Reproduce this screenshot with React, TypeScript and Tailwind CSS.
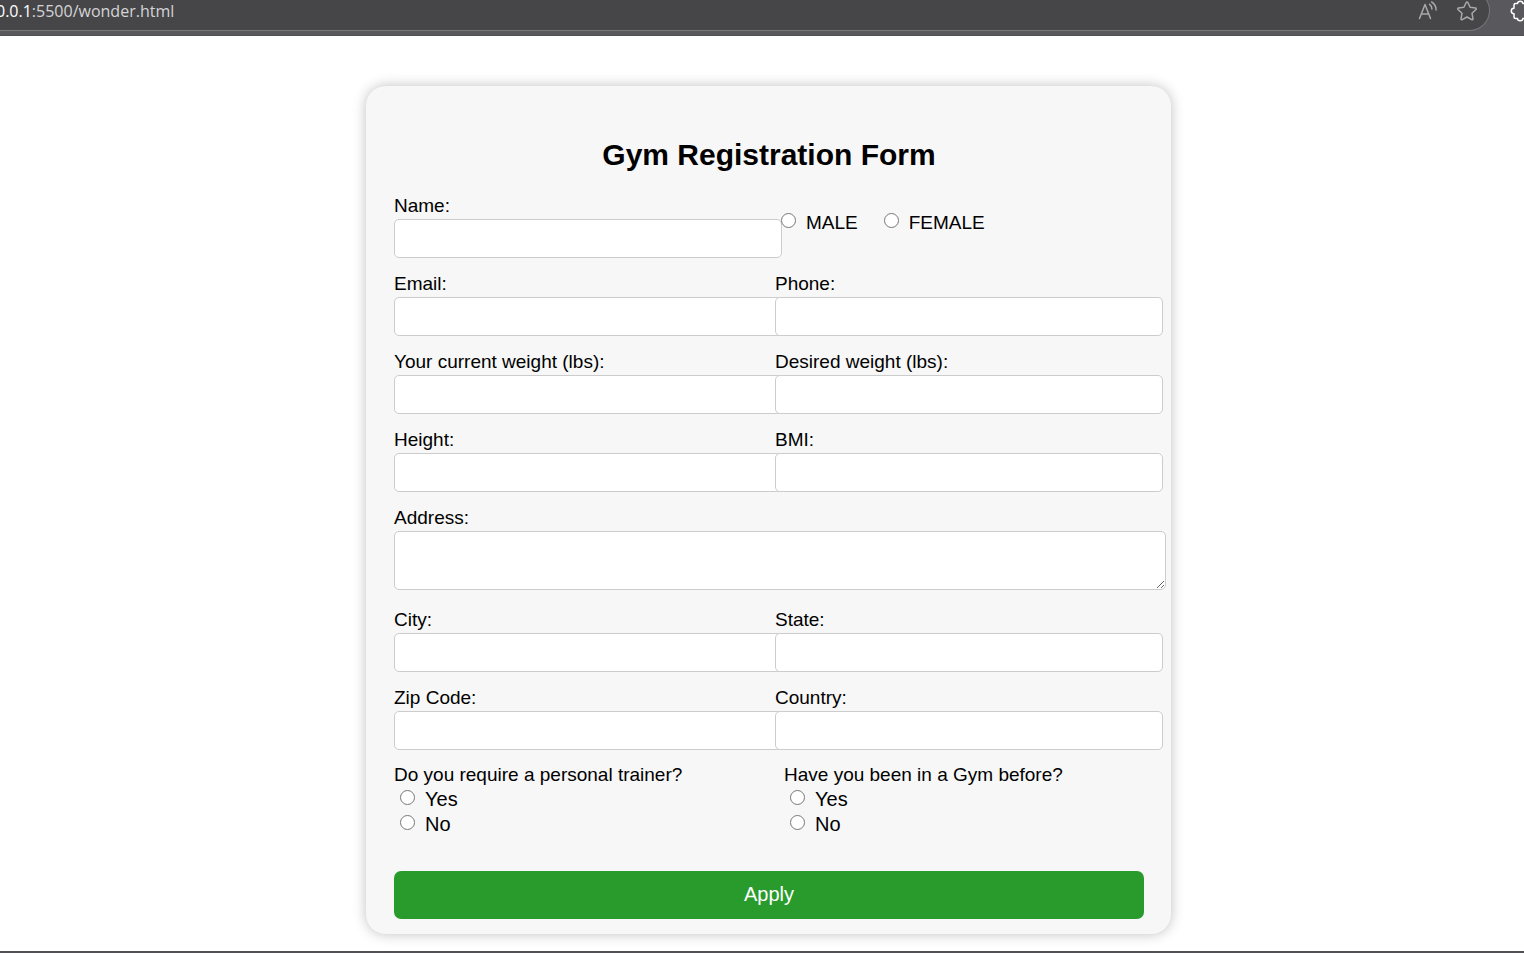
import React, { useId } from "react";

const inputClass =
  "block h-[39px] w-full rounded-[5px] border border-[#ccc] bg-white px-2 text-[19px]";

const labelClass = "mb-[2px] block text-[19px] leading-[22px]";

function Field({ label, type = "text" }: { label: string; type?: string }) {
  const id = useId();
  return (
    <div className="relative min-w-0">
      <label htmlFor={id} className={labelClass}>
        {label}
      </label>
      <div className="-mr-[7px]">
        <input id={id} type={type} className={inputClass} />
      </div>
    </div>
  );
}

function Choice({ name, label, small = false }: { name: string; label: string; small?: boolean }) {
  return (
    <label className={`flex items-start leading-[25px] ${small ? "text-[19px]" : "text-[20px]"}`}>
      <input
        type="radio"
        name={name}
        value={label}
        className="mt-[3px] mr-[10px] h-[15px] w-[15px] shrink-0"
      />
      {label}
    </label>
  );
}

function Question({ name, text }: { name: string; text: string }) {
  return (
    <fieldset>
      <legend className="text-[19px] leading-6">{text}</legend>
      <div className="pl-[6px]">
        <Choice name={name} label="Yes" />
        <Choice name={name} label="No" />
      </div>
    </fieldset>
  );
}

function AddressBar() {
  return (
    <header className="flex h-9 items-start overflow-hidden border-b border-[#505055] bg-[#58585d]">
      <div className="-mt-[10px] flex h-[41px] min-w-0 flex-1 items-center justify-between overflow-hidden rounded-r-full border border-l-0 border-[#77777b] bg-[#464649] pr-3">
        <span className="-ml-1 font-['Open_Sans',sans-serif] text-[16px] leading-6 whitespace-nowrap text-[#d4d4d6]">
          <span className="text-white">0.0.1</span>:5500/wonder.html
        </span>
        <div className="flex items-center gap-[19px] text-[#a9a9ac]">
          <button type="button" aria-label="Read aloud" className="block">
            <svg width="20" height="20" viewBox="0 0 20 20" fill="none" stroke="currentColor" strokeWidth="1.5" strokeLinecap="round" strokeLinejoin="round">
              <path d="M1.500 17.500 7 3.500l5.500 14M3.300 13h7.400" />
              <path d="M11.600 3.400c1.500 1 2.300 2.700 2.300 4.700M13.600 1c2.800 1.500 4.400 4.300 4.500 7.900" />
            </svg>
          </button>
          <button type="button" aria-label="Add to favorites" className="block">
            <svg width="20" height="20" viewBox="0 0 20 20" fill="none" stroke="currentColor" strokeWidth="1.5" strokeLinejoin="round">
              <path d="M9.300 1.300a.8.8 0 0 1 1.400 0l2.400 5 5.500.8a.8.8 0 0 1 .4 1.400l-4 3.800 1 5.500a.8.8 0 0 1-1.200.8L10 16l-4.800 2.600a.8.8 0 0 1-1.200-.8l1-5.500-4-3.800a.8.8 0 0 1 .4-1.400l5.500-.8z" />
            </svg>
          </button>
        </div>
      </div>
      <div className="w-[34px] shrink-0 overflow-hidden pl-5 text-white">
        <button type="button" aria-label="Extensions" className="block">
          <svg className="max-w-none" width="22" height="22" viewBox="0 0 22 22" fill="none" stroke="currentColor" strokeWidth="1.500" strokeLinejoin="round">
            <path d="M5.500 3.500H7.500a2.700 2.300 0 0 1 5.400 0H16a1.500 1.500 0 0 1 1.500 1.500V8.500a2.700 2.700 0 0 0 0 5.400V17a1.500 1.500 0 0 1-1.500 1.500h-3.100a2.700 2.300 0 0 1-5.400 0H5.500A1.500 1.500 0 0 1 4 17v-3.300a2.700 2.700 0 0 1 0-5.400V5A1.500 1.500 0 0 1 5.500 3.500z" />
          </svg>
        </button>
      </div>
    </header>
  );
}

export default function App() {
  return (
    <div className="flex min-h-screen flex-col bg-white font-['Liberation_Sans',Arial,sans-serif] text-black">
      <AddressBar />
      <main className="flex-1 pt-[50px] pb-[17px] pl-[13px]">
        <form
          onSubmit={(e) => e.preventDefault()}
          className="mx-auto w-full max-w-[805px] rounded-[20px] bg-[#f7f7f7] pt-[49px] pr-[27px] pb-[15px] pl-7 shadow-[0_0_13px_rgba(0,0,0,0.25)]"
        >
          <h1 className="mb-5 text-center text-[30px] leading-10 font-bold">Gym Registration Form</h1>

          <div className="-mr-3 grid grid-cols-2 gap-y-[15px]">
            <Field label="Name:" />
            <fieldset aria-label="Gender" className="relative flex gap-[26px] pt-[15px] pl-[6px]">
              <Choice name="gender" label="MALE" small />
              <Choice name="gender" label="FEMALE" small />
            </fieldset>
            <Field label="Email:" type="email" />
            <Field label="Phone:" type="tel" />
            <Field label="Your current weight (lbs):" />
            <Field label="Desired weight (lbs):" />
            <Field label="Height:" />
            <Field label="BMI:" />
            <div className="col-span-2 -mr-[10px] mb-1">
              <label htmlFor="address" className={labelClass}>
                Address:
              </label>
              <textarea
                id="address"
                className="block h-[59px] w-full resize rounded-[5px] border border-[#ccc] bg-white px-2 text-[19px]"
              />
            </div>
            <Field label="City:" />
            <Field label="State:" />
            <Field label="Zip Code:" />
            <Field label="Country:" />
          </div>

          <div className="-mr-[30px] mt-[13px] grid grid-cols-2">
            <Question name="trainer" text="Do you require a personal trainer?" />
            <Question name="experience" text="Have you been in a Gym before?" />
          </div>

          <button
            type="submit"
            className="mt-[34px] block h-12 w-full rounded-[7px] bg-[#299b2d] pb-[2px] text-[20px] text-white"
          >
            Apply
          </button>
        </form>
      </main>
      <footer className="h-[2px] bg-[#505055]" />
    </div>
  );
}
